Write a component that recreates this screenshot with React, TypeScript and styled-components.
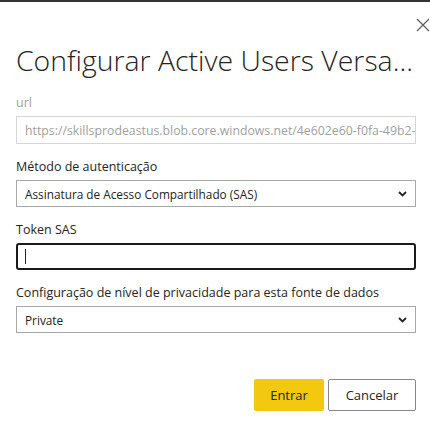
import React from "react"
import styled, {createGlobalStyle} from "styled-components"

const GlobalStyle = createGlobalStyle`
html, body {
	margin     : 0;
	padding    : 0;
	background : #ffffff;
}
body {
	font-family : "Open Sans", "Noto Sans", sans-serif;
	color       : #252423;
}
`

const Dialog = styled.div`
width          : 430px;
height         : 428px;
box-sizing     : border-box;
border-top     : 2px solid #333333;
display        : flex;
flex-direction : column;
padding        : 0 14px 0 16px;
overflow       : hidden;
`

const CloseRow = styled.div`
display         : flex;
justify-content : flex-end;
padding-top     : 16px;
margin-right    : -14px;
height          : 14px;
`

const CloseButton = styled.button`
border     : none;
background : transparent;
padding    : 0;
width      : 14px;
height     : 14px;
display    : flex;
cursor     : pointer;
`

const Title = styled.h1`
margin      : 8px 0 0 0;
font-size   : 28.4px;
font-weight : 300;
line-height : 40px;
color       : #252423;
white-space : nowrap;
`

const Form = styled.div`
display        : flex;
flex-direction : column;
margin-top     : 15px;
`

const Field = styled.div`
display        : flex;
flex-direction : column;
margin-bottom  : 15px;
`

const Label = styled.label<{muted?: boolean}>`
font-size     : 12.5px;
line-height   : 16px;
color         : ${p => p.muted ? "#a19f9d" : "#252423"};
margin-bottom : 5px;
`

const TextBox = styled.div<{focused?: boolean}>`
height        : ${p => p.focused ? "27px" : "28px"};
box-sizing    : border-box;
border        : ${p => p.focused ? "2px solid #1b1a19" : "1px solid #d6d6d6"};
border-radius : ${p => p.focused ? "3px" : "0"};
padding       : 0 ${p => p.focused ? "7px" : "8px"};
display       : flex;
align-items   : center;
font-size     : 12.3px;
color         : #a19f9d;
overflow      : hidden;
white-space   : nowrap;
`

const Caret = styled.span`
width      : 1px;
height     : 15px;
background : #252423;
`

const Select = styled.div`
height          : 27px;
box-sizing      : border-box;
border          : 1px solid #a8a8a8;
padding         : 0 8px;
display         : flex;
align-items     : center;
justify-content : space-between;
font-size       : 11.8px;
color           : #252423;
`

const Footer = styled.div`
display         : flex;
justify-content : flex-end;
gap             : 4px;
margin-top      : 31px;
`

const Button = styled.button<{primary?: boolean}>`
height        : 32px;
box-sizing    : border-box;
font-family   : inherit;
font-size     : 13px;
padding       : 0 14px;
border-radius : 2px;
cursor        : pointer;
background    : ${p => p.primary ? "#f2c811" : "#ffffff"};
border        : ${p => p.primary ? "1px solid #f2c811" : "1px solid #8a8886"};
color         : #252423;
min-width     : ${p => p.primary ? "70px" : "88px"};
`

function Chevron() {
	return (
		<svg width="9" height="6" viewBox="0 0 9 6">
			<polyline points="1,1 4.5,4.5 8,1" fill="none" stroke="#252423" strokeWidth="1.8"/>
		</svg>
	)
}

export default function App() {
	return (
		<>
			<GlobalStyle/>
			<Dialog>
				<CloseRow>
					<CloseButton aria-label="Fechar">
						<svg width="14" height="14" viewBox="0 0 14 14">
							<path d="M1 1 L13 13 M13 1 L1 13" stroke="#605e5c" strokeWidth="1.2"/>
						</svg>
					</CloseButton>
				</CloseRow>

				<Title>Configurar Active Users Versa...</Title>

				<Form>
					<Field>
						<Label muted>url</Label>
						<TextBox>https://skillsprodeastus.blob.core.windows.net/4e602e60-f0fa-49b2-</TextBox>
					</Field>

					<Field>
						<Label>Método de autenticação</Label>
						<Select>
							<span>Assinatura de Acesso Compartilhado (SAS)</span>
							<Chevron/>
						</Select>
					</Field>

					<Field>
						<Label>Token SAS</Label>
						<TextBox focused><Caret/></TextBox>
					</Field>

					<Field>
						<Label>Configuração de nível de privacidade para esta fonte de dados</Label>
						<Select>
							<span>Private</span>
							<Chevron/>
						</Select>
					</Field>
				</Form>

				<Footer>
					<Button primary>Entrar</Button>
					<Button>Cancelar</Button>
				</Footer>
			</Dialog>
		</>
	)
}
